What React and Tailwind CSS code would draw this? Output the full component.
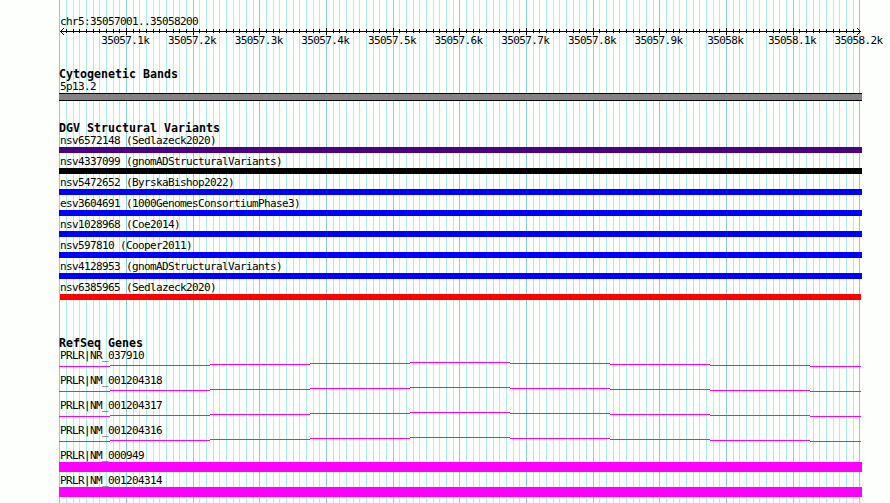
import React from "react";

const LEFT = 59;
const MINOR = 20 / 3; // 10 bp in pixels

const ticks = Array.from({ length: 121 }, (_, i) => ({
  x: Math.round(LEFT + 0.33 + i * MINOR),
  major: i % 10 === 0,
}));

const scaleLabels = [
  "35057.1k",
  "35057.2k",
  "35057.3k",
  "35057.4k",
  "35057.5k",
  "35057.6k",
  "35057.7k",
  "35057.8k",
  "35057.9k",
  "35058k",
  "35058.1k",
  "35058.2k",
];

const variants = [
  { name: "nsv6572148 (Sedlazeck2020)", bar: "bg-[#4b0082]" },
  { name: "nsv4337099 (gnomADStructuralVariants)", bar: "bg-black" },
  { name: "nsv5472652 (ByrskaBishop2022)", bar: "bg-[#0000ff]" },
  { name: "esv3604691 (1000GenomesConsortiumPhase3)", bar: "bg-[#0000ff]" },
  { name: "nsv1028968 (Coe2014)", bar: "bg-[#0000ff]" },
  { name: "nsv597810 (Cooper2011)", bar: "bg-[#0000ff]" },
  { name: "nsv4128953 (gnomADStructuralVariants)", bar: "bg-[#0000ff]" },
  { name: "nsv6385965 (Sedlazeck2020)", bar: "ml-px mr-px bg-[#ff0000]" },
];

const genes = [
  { name: "PRLR|NR_037910", intron: true },
  { name: "PRLR|NM_001204318", intron: true },
  { name: "PRLR|NM_001204317", intron: true },
  { name: "PRLR|NM_001204316", intron: true },
  { name: "PRLR|NM_000949", intron: false },
  { name: "PRLR|NM_001204314", intron: false },
];

function GridLines() {
  return (
    <svg
      className="absolute left-0 top-0"
      width="890"
      height="503"
      shapeRendering="crispEdges"
    >
      {ticks.map((t) => (
        <rect
          key={t.x}
          x={t.x}
          y="0"
          width="1"
          height="503"
          fill={t.major ? "#87ceeb" : "#afeeee"}
        />
      ))}
    </svg>
  );
}

function Ruler() {
  return (
    <svg
      className="block h-[9px] w-[803px]"
      viewBox="0 0 803 9"
      shapeRendering="crispEdges"
    >
      <rect x="1" y="4" width="801" height="1" />
      {ticks.slice(1, -1).map((t) => (
        <rect
          key={t.x}
          x={t.x - LEFT}
          y={t.major ? 1 : 2}
          width="1"
          height={t.major ? 7 : 4}
        />
      ))}
      {/* arrow heads */}
      {[1, 2, 3].map((d) => (
        <g key={d}>
          <rect x={1 + d} y={4 - d} width="1" height="1" />
          <rect x={1 + d} y={4 + d} width="1" height="1" />
          <rect x={801 - d} y={4 - d} width="1" height="1" />
          <rect x={801 - d} y={4 + d} width="1" height="1" />
        </g>
      ))}
    </svg>
  );
}

function Intron() {
  return (
    <svg
      className="block h-[5px] w-[802px]"
      viewBox="0 0 802 5"
      shapeRendering="crispEdges"
      fill="#ff00ff"
    >
      <rect x="0" y="4" width="51" height="1" />
      <rect x="51" y="3" width="100" height="1" />
      <rect x="151" y="2" width="100" height="1" />
      <rect x="251" y="1" width="100" height="1" />
      <rect x="351" y="0" width="100" height="1" />
      <rect x="451" y="1" width="100" height="1" />
      <rect x="551" y="2" width="100" height="1" />
      <rect x="651" y="3" width="100" height="1" />
      <rect x="751" y="4" width="51" height="1" />
    </svg>
  );
}

function TrackTitle({ children }) {
  return (
    <h2 className="h-[13px] text-[11.63px] leading-3 font-bold tracking-normal">
      {children}
    </h2>
  );
}

function Label({ children }) {
  return <p className="h-3 pl-px leading-3">{children}</p>;
}

export default function App() {
  return (
    <div className="relative h-[503px] w-[890px] overflow-hidden bg-[#fdfffc] font-['DejaVu_Sans_Mono',monospace] text-[11px] tracking-[-0.622px] whitespace-pre text-black">
      <GridLines />

      <main className="relative ml-[59px] w-[803px] pt-4">
        <div className="h-[11px]">
          <Label>chr5:35057001..35058200</Label>
        </div>
        <Ruler />

        {/* scale labels, centred on the major ticks */}
        <div className="-mt-px ml-[33px] flex h-[13px] w-[800px] leading-3">
          {scaleLabels.map((label) => (
            <span key={label} className="w-[66.67px] shrink-0 text-center">
              {label}
            </span>
          ))}
        </div>

        <section className="mt-5">
          <TrackTitle>Cytogenetic Bands</TrackTitle>
          <Label>5p13.2</Label>
          <div className="h-2 border-y border-black bg-[#848284]" />
        </section>

        <section className="mt-[21px]">
          <TrackTitle>DGV Structural Variants</TrackTitle>
          {variants.map((v) => (
            <div key={v.name} className="h-[21px]">
              <Label>{v.name}</Label>
              <div className={`h-1.5 ${v.bar}`} />
            </div>
          ))}
        </section>

        <section className="mt-[34px]">
          <TrackTitle>RefSeq Genes</TrackTitle>
          {genes.map((g) => (
            <div key={g.name} className="h-[25px]">
              <Label>{g.name}</Label>
              {g.intron ? <Intron /> : <div className="h-2.5 bg-[#ff00ff]" />}
            </div>
          ))}
        </section>
      </main>
    </div>
  );
}
